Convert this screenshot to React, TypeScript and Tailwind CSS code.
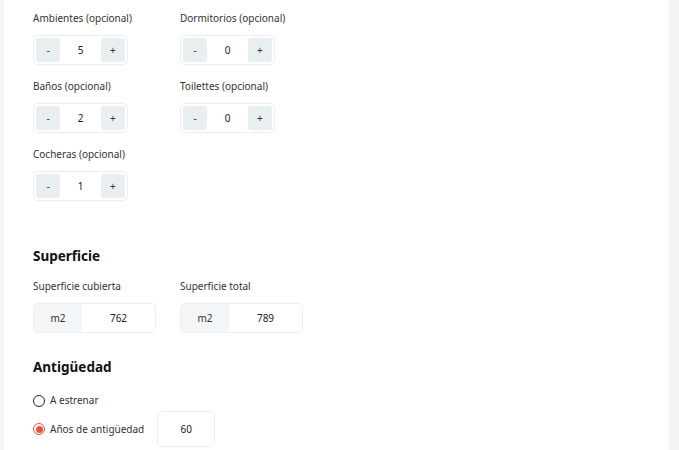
import React from 'react';

const font = { fontFamily: '"Noto Sans", "Open Sans", sans-serif' };

function Stepper({ label, value }: { label: string; value: number }) {
  return (
    <div className="w-[147px]">
      <div className="text-[10px] leading-[15px] text-[#333]">{label}</div>
      <div className="mt-[9px] flex h-[30px] w-[95px] items-center justify-between rounded-[5px] border border-[#eceef0] bg-white px-[2px]">
        <button className="flex h-[24px] w-[24px] items-center justify-center rounded-[3px] bg-[#e9eef1] text-[10px] text-[#333]">-</button>
        <span className="text-[10px] text-[#222]">{value}</span>
        <button className="flex h-[24px] w-[24px] items-center justify-center rounded-[3px] bg-[#e9eef1] text-[10px] text-[#333]">+</button>
      </div>
    </div>
  );
}

function AreaInput({ label, value }: { label: string; value: string }) {
  return (
    <div className="w-[147px]">
      <div className="text-[10px] leading-[15px] text-[#333]">{label}</div>
      <div className="mt-[9px] flex h-[30px] w-[123px] overflow-hidden rounded-[5px] border border-[#eceef0]">
        <div className="flex w-[48px] items-center justify-center bg-[#f3f5f7] text-[10px] text-[#333]">m2</div>
        <div className="flex flex-1 items-center justify-center bg-white text-[10px] text-[#222]">{value}</div>
      </div>
    </div>
  );
}

export default function App() {
  return (
    <div className="flex h-[450px] w-[679px] overflow-hidden bg-white" style={font}>
      <div className="w-[4px] bg-[#f6f6f6]" />
      <div className="flex-1 bg-white pl-[29px] pt-[11px]">
        <div className="flex flex-wrap gap-y-[14px] w-[300px]">
          <Stepper label="Ambientes (opcional)" value={5} />
          <Stepper label="Dormitorios (opcional)" value={0} />
          <Stepper label="Baños (opcional)" value={2} />
          <Stepper label="Toilettes (opcional)" value={0} />
          <Stepper label="Cocheras (opcional)" value={1} />
        </div>

        <h2 className="mt-[46px] text-[13.5px] font-bold leading-[18px] text-[#111]">Superficie</h2>
        <div className="mt-[14px] flex">
          <AreaInput label="Superficie cubierta" value="762" />
          <AreaInput label="Superficie total" value="789" />
        </div>

        <h2 className="mt-[25px] text-[13.5px] font-bold leading-[18px] text-[#111]">Antigüedad</h2>
        <div className="mt-[17px] flex items-center gap-[5px]">
          <span className="h-[12px] w-[12px] rounded-full border-[1.5px] border-[#222] bg-white" />
          <span className="text-[10px] text-[#333]">A estrenar</span>
        </div>
        <div className="mt-[3px] flex items-center">
          <span className="flex h-[12px] w-[12px] items-center justify-center rounded-full border-[1.5px] border-[#e8553a] bg-white">
            <span className="h-[7px] w-[7px] rounded-full bg-[#e8553a]" />
          </span>
          <span className="ml-[5px] text-[10px] text-[#333]">Años de antigüedad</span>
          <div className="ml-[13px] flex h-[36px] w-[58px] items-center justify-center rounded-[5px] border border-[#eceef0] text-[10px] text-[#222]">60</div>
        </div>
      </div>
      <div className="w-[10px] bg-[#f4f4f4]" />
    </div>
  );
}
